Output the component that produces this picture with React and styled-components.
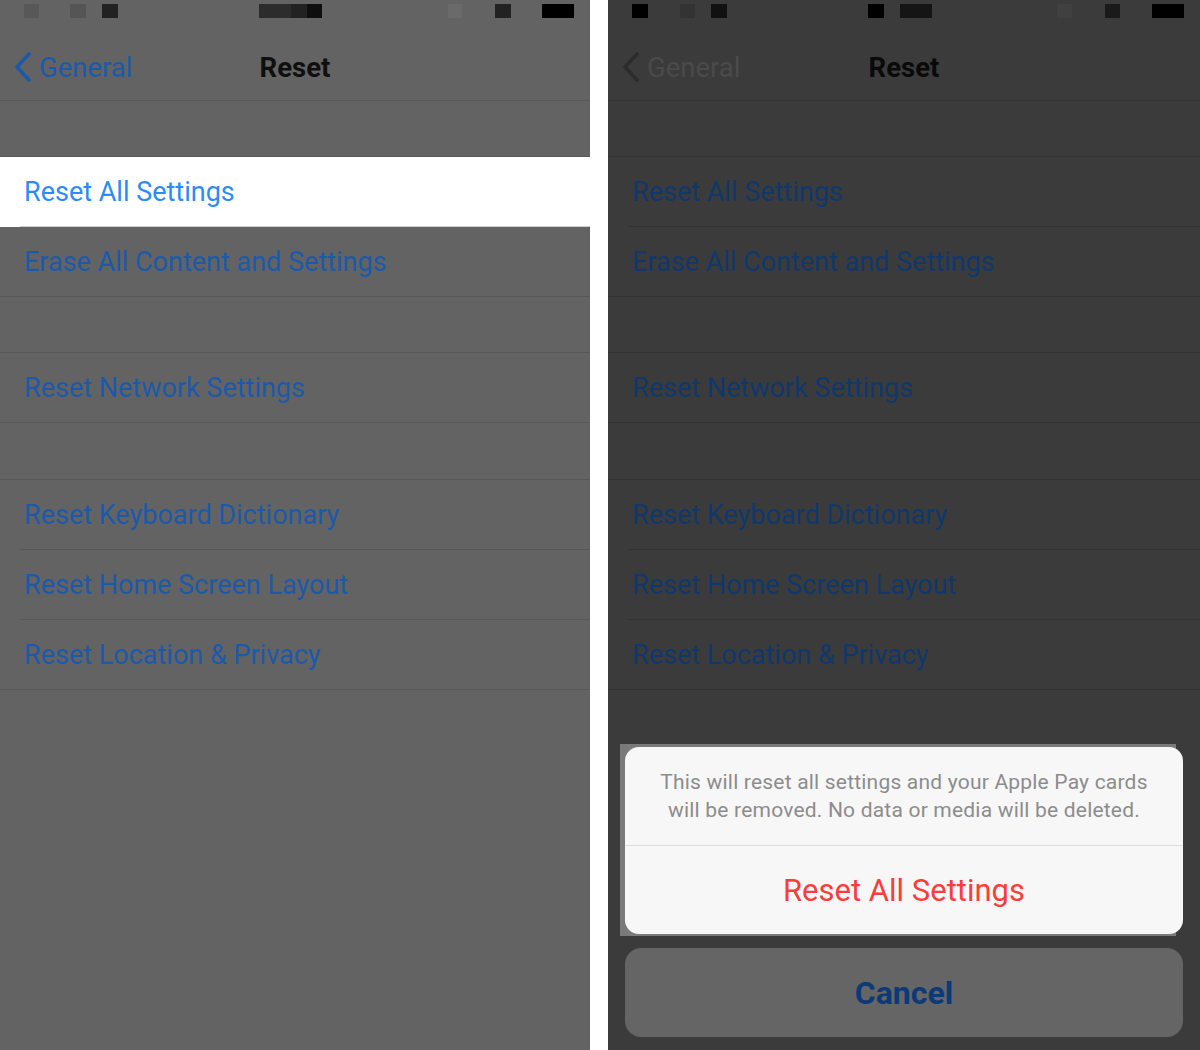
import React from 'react'
import styled, { createGlobalStyle } from 'styled-components'

const GlobalStyle = createGlobalStyle`
  html, body {
    margin: 0;
    padding: 0;
    background: #ffffff;
  }
  body {
    font-family: Roboto, "Liberation Sans", sans-serif;
  }
`

const tones = {
  dim: {
    bg: '#636364',
    line: '#58585a',
    blue: '#1c5aa9',
    back: '#1c5aa9',
    title: '#0f0f10',
  },
  dark: {
    bg: '#3b3b3c',
    line: '#333334',
    blue: '#10386b',
    back: '#2c2c2d',
    backText: '#4a4a4b',
    title: '#0a0a0a',
  },
}

const Page = styled.div`
  display: flex;
  gap: 18px;
  width: 1200px;
  height: 1050px;
  overflow: hidden;
  background: #fff;
`

const Panel = styled.div`
  display: flex;
  flex-direction: column;
  width: ${p => p.$width}px;
  height: 1050px;
  background: ${p => tones[p.$tone].bg};
`

const StatusBar = styled.div`
  display: flex;
  height: 30px;
  padding-top: 4px;
  box-sizing: border-box;
`

const Block = styled.div`
  width: ${p => p.$w}px;
  height: 14px;
  margin-left: ${p => p.$gap}px;
  background: ${p => p.$c};
`

const NavBar = styled.div`
  display: grid;
  grid-template-columns: 1fr auto 1fr;
  align-items: center;
  height: 71px;
  padding-top: 4px;
  border-bottom: 1px solid ${p => tones[p.$tone].line};
  box-sizing: border-box;
`

const Back = styled.div`
  display: flex;
  align-items: center;
  gap: 6px;
  padding-left: 13px;
  font-size: 27.5px;
  color: ${p => tones[p.$tone].backText || tones[p.$tone].blue};
  svg {
    display: block;
  }
`

const Title = styled.div`
  font-size: 27.5px;
  font-weight: 700;
  color: ${p => tones[p.$tone].title};
`

const Section = styled.div`
  margin-top: ${p => p.$top}px;
  border-top: 1px solid ${p => tones[p.$tone].line};
  border-bottom: 1px solid ${p => tones[p.$tone].line};
`

const Row = styled.div`
  padding-left: 20px;
  background: ${p => (p.$active ? '#ffffff' : 'transparent')};
`

const RowLabel = styled.div`
  display: flex;
  align-items: center;
  height: 69px;
  padding-left: 4px;
  font-size: 27px;
  color: ${p => (p.$active ? '#2e8bf6' : tones[p.$tone].blue)};
  ${Row}:not(:last-child) & {
    border-bottom: 1px solid ${p => (p.$active ? '#cfcfd3' : tones[p.$tone].line)};
  }
`

const Sheet = styled.div`
  margin-top: auto;
  padding: 0 17px 13px 17px;
`

const AlertGroup = styled.div`
  position: relative;
  &::before {
    content: '';
    position: absolute;
    top: -3px;
    left: -5px;
    right: 7px;
    bottom: -2px;
    background: #7a7a7b;
  }
`

const Card = styled.div`
  position: relative;
  background: #f7f7f7;
  border-radius: 14px;
  overflow: hidden;
`

const Message = styled.div`
  padding: 21px 16px;
  text-align: center;
  font-size: 21px;
  line-height: 28px;
  letter-spacing: 0.2px;
  color: #8c8c8d;
  border-bottom: 1px solid #dddddf;
`

const Action = styled.div`
  display: flex;
  align-items: center;
  justify-content: center;
  height: 88px;
  font-size: ${p => p.$size}px;
  color: ${p => p.$color};
  font-weight: ${p => p.$weight || 400};
`

const CancelButton = styled(Action)`
  margin-top: 14px;
  height: 89px;
  border-radius: 16px;
  background: #656566;
`

const Chevron = ({ color }) => (
  <svg width="20" height="32" viewBox="0 0 20 32">
    <polyline points="16,3 4,16 16,29" fill="none" stroke={color} strokeWidth="3.6" strokeLinecap="round" strokeLinejoin="round" />
  </svg>
)

const leftBlocks = [
  { gap: 24, w: 15, c: '#585859' },
  { gap: 31, w: 16, c: '#555556' },
  { gap: 16, w: 16, c: '#222223' },
  { gap: 141, w: 32, c: '#2c2c2d' },
  { gap: 0, w: 16, c: '#222223' },
  { gap: 0, w: 15, c: '#0e0e0e' },
  { gap: 126, w: 14, c: '#6a6a6b' },
  { gap: 33, w: 16, c: '#222223' },
  { gap: 31, w: 32, c: '#000000' },
]

const rightBlocks = [
  { gap: 24, w: 16, c: '#000000' },
  { gap: 32, w: 15, c: '#333334' },
  { gap: 16, w: 16, c: '#111111' },
  { gap: 141, w: 16, c: '#000000' },
  { gap: 16, w: 32, c: '#151515' },
  { gap: 125, w: 15, c: '#404041' },
  { gap: 33, w: 15, c: '#1a1a1a' },
  { gap: 32, w: 32, c: '#000000' },
]

const sections = [
  { top: 55, items: ['Reset All Settings', 'Erase All Content and Settings'] },
  { top: 55, items: ['Reset Network Settings'] },
  { top: 56, items: ['Reset Keyboard Dictionary', 'Reset Home Screen Layout', 'Reset Location & Privacy'] },
]

const Screen = ({ tone, width, blocks, highlight, children }) => (
  <Panel $tone={tone} $width={width}>
    <StatusBar>
      {blocks.map((b, i) => (
        <Block key={i} $gap={b.gap} $w={b.w} $c={b.c} />
      ))}
    </StatusBar>
    <NavBar $tone={tone}>
      <Back $tone={tone}>
        <Chevron color={tones[tone].back} />
        General
      </Back>
      <Title $tone={tone}>Reset</Title>
      <div />
    </NavBar>
    {sections.map((s, si) => (
      <Section key={si} $top={s.top} $tone={tone}>
        {s.items.map((item, ii) => {
          const active = highlight && si === 0 && ii === 0
          return (
            <Row key={item} $active={active}>
              <RowLabel $tone={tone} $active={active}>{item}</RowLabel>
            </Row>
          )
        })}
      </Section>
    ))}
    {children}
  </Panel>
)

const App = () => {
  return (
    <>
      <GlobalStyle />
      <Page>
        <Screen tone="dim" width={590} blocks={leftBlocks} highlight />
        <Screen tone="dark" width={592} blocks={rightBlocks}>
          <Sheet>
            <AlertGroup>
              <Card>
                <Message>
                  This will reset all settings and your Apple Pay cards
                  <br />
                  will be removed. No data or media will be deleted.
                </Message>
                <Action $color="#fc3d39" $size={31}>Reset All Settings</Action>
              </Card>
            </AlertGroup>
            <CancelButton $color="#0c3a78" $size={32} $weight={700}>Cancel</CancelButton>
          </Sheet>
        </Screen>
      </Page>
    </>
  )
}

export default App
